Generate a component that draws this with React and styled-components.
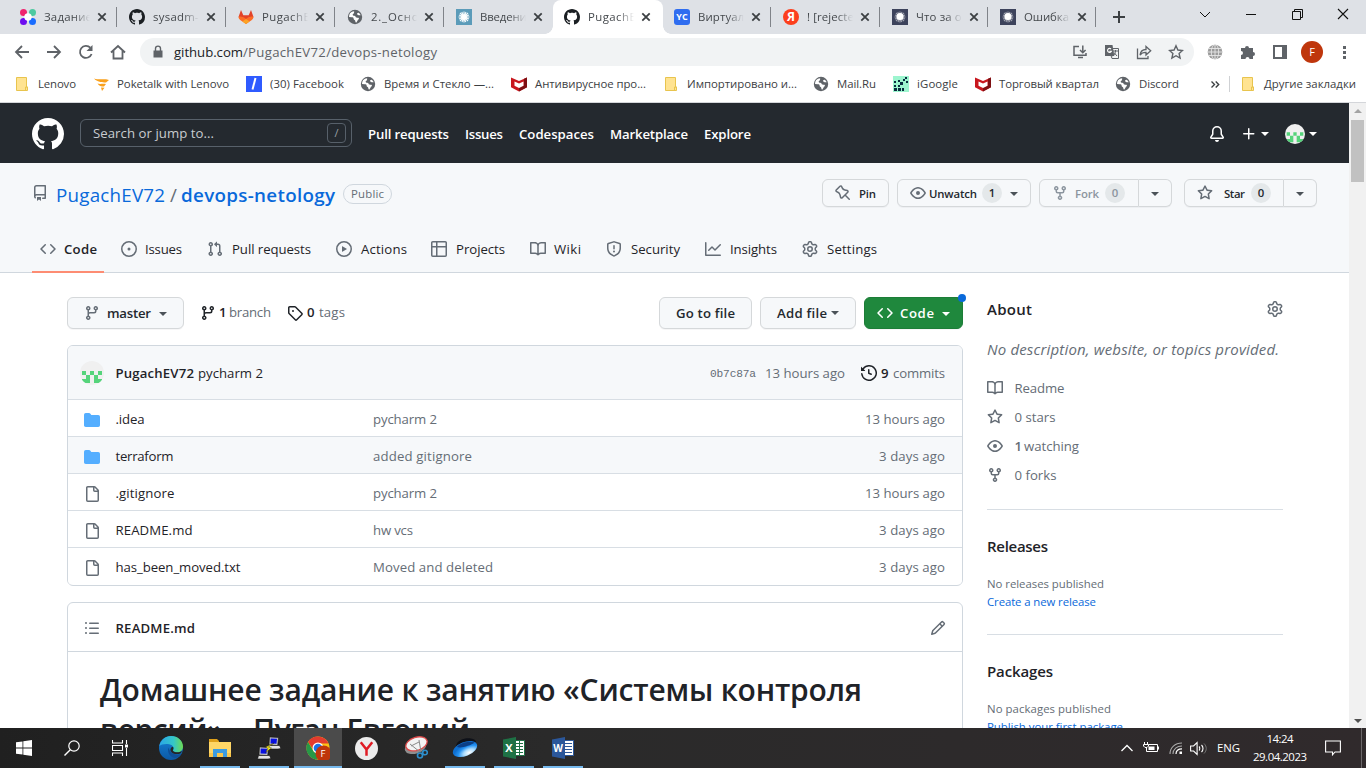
import React, { useLayoutEffect, useRef, useState } from "react";
import styled, { createGlobalStyle, css } from "styled-components";

const Global = createGlobalStyle`
  *, *::before, *::after { box-sizing: border-box; }
  body { margin: 0; overflow: hidden; background: #fff; }
  body, button, input { font-family: "Open Sans", "Noto Sans", sans-serif; }
  svg { display: block; flex: none; }
  h1, h2, p { margin: 0; }
`;

/* ---------- text ---------- */

const TextBox = styled.span`
  display: inline-block;
  flex: none;
  position: relative;
  top: ${(p) => p.$dy || 0}px;
  width: ${(p) => p.$w}px;
  margin-left: ${(p) => p.$ml || 0}px;
  font-size: ${(p) => p.$size || 13.2}px;
  font-weight: ${(p) => (p.$bold ? 600 : 400)};
  font-style: ${(p) => (p.$italic ? "italic" : "normal")};
  font-family: ${(p) => (p.$mono ? '"Liberation Mono", monospace' : "inherit")};
  color: ${(p) => p.$color || "inherit"};
  white-space: nowrap;
`;

/* A single line of text whose tracking is tuned so that it takes up exactly w pixels. */
function Text({ w, ml, size, bold, italic, mono, color, dy, children }) {
  const ref = useRef(null);
  const [tracking, setTracking] = useState(0);
  useLayoutEffect(() => {
    const natural = ref.current.getBoundingClientRect().width;
    setTracking((w - natural) / Math.max(1, children.length - 1));
  }, [w, children]);
  return (
    <TextBox $w={w} $ml={ml} $size={size} $bold={bold} $italic={italic} $mono={mono} $color={color} $dy={dy}>
      <span ref={ref} style={{ letterSpacing: tracking }}>{children}</span>
    </TextBox>
  );
}

/* ---------- icons ---------- */

const ring = "M8 0a8 8 0 100 16A8 8 0 008 0zM1.5 8a6.5 6.5 0 1113 0 6.5 6.5 0 01-13 0z";
const paths = {
  mark: "M8 0C3.58 0 0 3.58 0 8c0 3.54 2.29 6.53 5.47 7.59.4.07.55-.17.55-.38 0-.19-.01-.82-.01-1.49-2.01.37-2.53-.49-2.69-.94-.09-.23-.48-.94-.82-1.13-.28-.15-.68-.52-.01-.53.63-.01 1.08.58 1.23.82.72 1.21 1.87.87 2.33.66.07-.52.28-.87.51-1.07-1.78-.2-3.64-.89-3.64-3.95 0-.87.31-1.59.82-2.15-.08-.2-.36-1.02.08-2.12 0 0 .67-.21 2.2.82.64-.18 1.32-.27 2-.27.68 0 1.36.09 2 .27 1.53-1.04 2.2-.82 2.2-.82.44 1.1.16 1.92.08 2.12.51.56.82 1.27.82 2.15 0 3.07-1.87 3.75-3.65 3.95.29.25.54.73.54 1.48 0 1.07-.01 1.93-.01 2.2 0 .21.15.46.55.38A8.013 8.013 0 0016 8c0-4.42-3.58-8-8-8z",
  repo: "M2 2.5A2.5 2.5 0 014.5 0h8.75a.75.75 0 01.75.75v12.5a.75.75 0 01-.75.75h-2.5a.75.75 0 110-1.5h1.75v-2h-8a1 1 0 00-.714 1.7.75.75 0 01-1.072 1.05A2.495 2.495 0 012 11.5v-9zm10.5-1V9h-8c-.356 0-.694.074-1 .208V2.5a1 1 0 011-1h8zM5 12.25v3.25a.25.25 0 00.4.2l1.45-1.087a.25.25 0 01.3 0L8.6 15.7a.25.25 0 00.4-.2v-3.25a.25.25 0 00-.25-.25h-3.5a.25.25 0 00-.25.25z",
  code: "M4.72 3.22a.75.75 0 011.06 1.06L2.06 8l3.72 3.72a.75.75 0 11-1.06 1.06L.47 8.53a.75.75 0 010-1.06l4.25-4.25zm6.56 0a.75.75 0 10-1.06 1.06L13.94 8l-3.72 3.72a.75.75 0 101.06 1.06l4.25-4.25a.75.75 0 000-1.06l-4.25-4.25z",
  issue: "M8 9.5a1.5 1.5 0 100-3 1.5 1.5 0 000 3z" + ring,
  pull: "M7.177 3.073L9.573.677A.25.25 0 0110 .854v4.792a.25.25 0 01-.427.177L7.177 3.427a.25.25 0 010-.354zM3.75 2.5a.75.75 0 100 1.5.75.75 0 000-1.5zm-2.25.75a2.25 2.25 0 113 2.122v5.256a2.251 2.251 0 11-1.5 0V5.372A2.25 2.25 0 011.5 3.25zM11 2.5h-1V4h1a1 1 0 011 1v5.628a2.251 2.251 0 101.5 0V5A2.5 2.5 0 0011 2.5zm1 10.25a.75.75 0 111.5 0 .75.75 0 01-1.5 0zM3.75 12a.75.75 0 100 1.5.75.75 0 000-1.5z",
  play: ring + "M6.379 5.227A.25.25 0 006 5.442v5.117a.25.25 0 00.379.214l4.264-2.559a.25.25 0 000-.428L6.379 5.227z",
  table: "M0 1.75C0 .784.784 0 1.75 0h12.5C15.216 0 16 .784 16 1.75v12.5A1.75 1.75 0 0 1 14.25 16H1.75A1.75 1.75 0 0 1 0 14.25ZM6.5 6.5v8h7.75a.25.25 0 0 0 .25-.25V6.5Zm8-1.5V1.75a.25.25 0 0 0-.25-.25H6.5V5Zm-13 1.5v7.75c0 .138.112.25.25.25H5v-8ZM5 5V1.5H1.75a.25.25 0 0 0-.25.25V5Z",
  book: "M0 1.75A.75.75 0 01.75 1h4.253c1.227 0 2.317.59 3 1.501A3.744 3.744 0 0111.006 1h4.245a.75.75 0 01.75.75v10.5a.75.75 0 01-.75.75h-4.507a2.25 2.25 0 00-1.591.659l-.622.621a.75.75 0 01-1.06 0l-.622-.621A2.25 2.25 0 005.258 13H.75a.75.75 0 01-.75-.75V1.75zm8.755 3a2.25 2.25 0 012.25-2.25H14.5v9h-3.757c-.71 0-1.4.201-1.992.572l.004-7.322zm-1.504 7.324l.004-5.073-.002-2.253A2.25 2.25 0 005.003 2.5H1.5v9h3.757a3.75 3.75 0 011.994.574z",
  shield: "M7.467.133a1.75 1.75 0 011.066 0l5.25 1.68A1.75 1.75 0 0115 3.48V7c0 1.566-.32 3.182-1.303 4.682-.983 1.498-2.585 2.813-5.032 3.855a1.7 1.7 0 01-1.33 0c-2.447-1.042-4.049-2.357-5.032-3.855C1.32 10.182 1 8.566 1 7V3.48a1.75 1.75 0 011.217-1.667l5.25-1.68zm.61 1.429a.25.25 0 00-.153 0l-5.25 1.68a.25.25 0 00-.174.238V7c0 1.358.275 2.666 1.057 3.86.784 1.194 2.121 2.34 4.366 3.297a.2.2 0 00.154 0c2.245-.956 3.582-2.104 4.366-3.298C13.225 9.666 13.5 8.36 13.5 7V3.48a.25.25 0 00-.174-.237l-5.25-1.68zM9 10.5a1 1 0 11-2 0 1 1 0 012 0zm-.25-5.75a.75.75 0 10-1.5 0v3a.75.75 0 001.5 0v-3z",
  graph: "M1.5 1.75a.75.75 0 00-1.5 0v12.5c0 .414.336.75.75.75h14.5a.75.75 0 000-1.5H1.5V1.75zm14.28 2.53a.75.75 0 00-1.06-1.06L10 7.94 7.53 5.47a.75.75 0 00-1.06 0L3.22 8.72a.75.75 0 001.06 1.06L7 7.06l2.47 2.47a.75.75 0 001.06 0l5.25-5.25z",
  gear: "M8 0a8.2 8.2 0 0 1 .701.031C9.444.095 9.99.645 10.16 1.29l.288 1.107c.018.066.079.158.212.224.231.114.454.243.668.386.123.082.233.09.299.071l1.103-.303c.644-.176 1.392.021 1.82.63.27.385.506.792.704 1.218.315.675.111 1.422-.364 1.891l-.814.806c-.049.048-.098.147-.088.294.016.257.016.515 0 .772-.01.147.038.246.088.294l.814.806c.475.469.679 1.216.364 1.891a7.977 7.977 0 0 1-.704 1.217c-.428.61-1.176.807-1.82.63l-1.102-.302c-.067-.019-.177-.011-.3.071a5.909 5.909 0 0 1-.668.386c-.133.066-.194.158-.211.224l-.29 1.106c-.168.646-.715 1.196-1.458 1.26a8.006 8.006 0 0 1-1.402 0c-.743-.064-1.289-.614-1.458-1.26l-.289-1.106c-.018-.066-.079-.158-.212-.224a5.738 5.738 0 0 1-.668-.386c-.123-.082-.233-.09-.299-.071l-1.103.303c-.644.176-1.392-.021-1.82-.63a8.12 8.12 0 0 1-.704-1.218c-.315-.675-.111-1.422.363-1.891l.815-.806c.05-.048.098-.147.088-.294a6.214 6.214 0 0 1 0-.772c.01-.147-.038-.246-.088-.294l-.815-.806C.635 6.045.431 5.298.746 4.623a7.92 7.92 0 0 1 .704-1.217c.428-.61 1.176-.807 1.82-.63l1.102.302c.067.019.177.011.3-.071.214-.143.437-.272.668-.386.133-.066.194-.158.211-.224l.29-1.106C6.009.645 6.556.095 7.299.03 7.53.01 7.764 0 8 0Zm-.571 1.525c-.036.003-.108.036-.137.146l-.289 1.105c-.147.561-.549.967-.998 1.189-.173.086-.34.183-.5.29-.417.278-.97.423-1.529.27l-1.103-.303c-.109-.03-.175.016-.195.045-.22.312-.412.644-.573.99-.014.031-.021.11.059.19l.815.806c.411.406.562.957.53 1.456a4.709 4.709 0 0 0 0 .582c.032.499-.119 1.05-.53 1.456l-.815.806c-.081.08-.073.159-.059.19.162.346.353.677.573.989.02.03.085.076.195.046l1.102-.303c.56-.153 1.113-.008 1.53.27.161.107.328.204.501.29.447.222.85.629.997 1.189l.289 1.105c.029.109.101.143.137.146a6.6 6.6 0 0 0 1.142 0c.036-.003.108-.036.137-.146l.289-1.105c.147-.561.549-.967.998-1.189.173-.086.34-.183.5-.29.417-.278.97-.423 1.529-.27l1.103.303c.109.029.175-.016.195-.045.22-.313.411-.644.573-.99.014-.031.021-.11-.059-.19l-.815-.806c-.411-.406-.562-.957-.53-1.456a4.709 4.709 0 0 0 0-.582c-.032-.499.119-1.05.53-1.456l.815-.806c.081-.08.073-.159.059-.19a6.464 6.464 0 0 0-.573-.989c-.02-.03-.085-.076-.195-.046l-1.102.303c-.56.153-1.113.008-1.53-.27a4.44 4.44 0 0 0-.501-.29c-.447-.222-.85-.629-.997-1.189l-.289-1.105c-.029-.11-.101-.143-.137-.146a6.6 6.6 0 0 0-1.142 0ZM11 8a3 3 0 1 1-6 0 3 3 0 0 1 6 0ZM9.5 8a1.5 1.5 0 1 0-3.001.001A1.5 1.5 0 0 0 9.5 8Z",
  pin: "M4.456.734a1.75 1.75 0 012.826.504l.613 1.327a3.081 3.081 0 002.084 1.707l2.454.584c1.332.317 1.8 1.972.832 2.94L11.06 10l3.72 3.72a.75.75 0 11-1.061 1.06L10 11.06l-2.204 2.205c-.968.968-2.623.5-2.94-.832l-.584-2.454a3.081 3.081 0 00-1.707-2.084l-1.327-.613a1.75 1.75 0 01-.504-2.826L4.456.734zM5.92 1.866a.25.25 0 00-.404-.072L1.794 5.516a.25.25 0 00.072.404l1.328.613A4.582 4.582 0 015.73 9.63l.584 2.454a.25.25 0 00.42.12l5.47-5.47a.25.25 0 00-.12-.42L9.63 5.73a4.581 4.581 0 01-3.098-2.537L5.92 1.866z",
  eye: "M1.679 7.932c.412-.621 1.242-1.75 2.366-2.717C5.175 4.242 6.527 3.5 8 3.5c1.473 0 2.824.742 3.955 1.715 1.124.967 1.954 2.096 2.366 2.717a.119.119 0 010 .136c-.412.621-1.242 1.75-2.366 2.717C10.825 11.758 9.473 12.5 8 12.5c-1.473 0-2.824-.742-3.955-1.715C2.92 9.818 2.09 8.69 1.679 8.068a.119.119 0 010-.136zM8 2c-1.981 0-3.67.992-4.933 2.078C1.797 5.169.88 6.423.43 7.1a1.619 1.619 0 000 1.798c.45.678 1.367 1.932 2.637 3.024C4.329 13.008 6.019 14 8 14c1.981 0 3.67-.992 4.933-2.078 1.27-1.091 2.187-2.345 2.637-3.023a1.619 1.619 0 000-1.798c-.45-.678-1.367-1.932-2.637-3.023C11.671 2.992 9.981 2 8 2zm0 8a2 2 0 100-4 2 2 0 000 4z",
  fork: "M5 3.25a.75.75 0 11-1.5 0 .75.75 0 011.5 0zm0 2.122a2.25 2.25 0 10-1.5 0v.878A2.25 2.25 0 005.75 8.5h1.5v2.128a2.251 2.251 0 101.5 0V8.5h1.5a2.25 2.25 0 002.25-2.25v-.878a2.25 2.25 0 10-1.5 0v.878a.75.75 0 01-.75.75h-4.5A.75.75 0 015 6.25v-.878zm3.75 7.378a.75.75 0 11-1.5 0 .75.75 0 011.5 0zm3-8.75a.75.75 0 100-1.5.75.75 0 000 1.5z",
  star: "M8 .25a.75.75 0 01.673.418l1.882 3.815 4.21.612a.75.75 0 01.416 1.279l-3.046 2.97.719 4.192a.75.75 0 01-1.088.791L8 12.347l-3.766 1.98a.75.75 0 01-1.088-.79l.72-4.194L.818 6.374a.75.75 0 01.416-1.28l4.21-.611L7.327.668A.75.75 0 018 .25zm0 2.445L6.615 5.5a.75.75 0 01-.564.41l-3.097.45 2.24 2.184a.75.75 0 01.216.664l-.528 3.084 2.769-1.456a.75.75 0 01.698 0l2.77 1.456-.53-3.084a.75.75 0 01.216-.664l2.24-2.183-3.096-.45a.75.75 0 01-.564-.41L8 2.694v.001z",
  bell: "M8 16a2 2 0 001.985-1.75c.017-.137-.097-.25-.235-.25h-3.5c-.138 0-.252.113-.235.25A2 2 0 008 16zM8 1.5A3.5 3.5 0 004.5 5v2.947c0 .346-.102.683-.294.97l-1.703 2.556a.018.018 0 00-.003.01l.001.006c0 .002.002.004.004.006a.017.017 0 00.006.004l.007.001h10.964l.007-.001a.016.016 0 00.006-.004.016.016 0 00.004-.006l.001-.007a.017.017 0 00-.003-.01l-1.703-2.554a1.75 1.75 0 01-.294-.97V5A3.5 3.5 0 008 1.5zM3 5a5 5 0 0110 0v2.947c0 .05.015.098.042.139l1.703 2.555A1.518 1.518 0 0113.482 13H2.518a1.518 1.518 0 01-1.263-2.36l1.703-2.554A.25.25 0 003 7.947V5z",
  plus: "M7.75 2a.75.75 0 01.75.75V7h4.25a.75.75 0 110 1.5H8.5v4.25a.75.75 0 11-1.5 0V8.5H2.75a.75.75 0 010-1.5H7V2.75A.75.75 0 017.75 2z",
  branch: "M9.5 3.25a2.25 2.25 0 1 1 3 2.122V6A2.5 2.5 0 0 1 10 8.5H6a1 1 0 0 0-1 1v1.128a2.251 2.251 0 1 1-1.5 0V5.372a2.25 2.25 0 1 1 1.5 0v1.836A2.493 2.493 0 0 1 6 7h4a1 1 0 0 0 1-1v-.628A2.25 2.25 0 0 1 9.5 3.25Zm-6 0a.75.75 0 1 0 1.5 0 .75.75 0 0 0-1.5 0Zm8.25-.75a.75.75 0 1 0 0 1.5.75.75 0 0 0 0-1.5ZM4.25 12a.75.75 0 1 0 0 1.5.75.75 0 0 0 0-1.5Z",
  tag: "M1 7.775V2.75C1 1.784 1.784 1 2.75 1h5.025c.464 0 .91.184 1.238.513l6.25 6.25a1.75 1.75 0 0 1 0 2.474l-5.026 5.026a1.75 1.75 0 0 1-2.474 0l-6.25-6.25A1.752 1.752 0 0 1 1 7.775Zm1.5 0c0 .066.026.13.073.177l6.25 6.25a.25.25 0 0 0 .354 0l5.025-5.025a.25.25 0 0 0 0-.354l-6.25-6.25a.25.25 0 0 0-.177-.073H2.75a.25.25 0 0 0-.25.25ZM6 5a1 1 0 1 1 0 2 1 1 0 0 1 0-2Z",
  history: "m.427 1.927 1.215 1.215a8.002 8.002 0 1 1-1.6 5.685.75.75 0 1 1 1.493-.154 6.5 6.5 0 1 0 1.18-4.458l1.358 1.358A.25.25 0 0 1 3.896 6H.25A.25.25 0 0 1 0 5.75V2.104a.25.25 0 0 1 .427-.177ZM7.75 4a.75.75 0 0 1 .75.75v2.992l2.028.812a.75.75 0 0 1-.557 1.392l-2.5-1A.751.751 0 0 1 7 8.25v-3.5A.75.75 0 0 1 7.75 4Z",
  file: "M2 1.75C2 .784 2.784 0 3.75 0h6.586c.464 0 .909.184 1.237.513l2.914 2.914c.329.328.513.773.513 1.237v9.586A1.75 1.75 0 0 1 13.25 16h-9.5A1.75 1.75 0 0 1 2 14.25Zm1.75-.25a.25.25 0 0 0-.25.25v12.5c0 .138.112.25.25.25h9.5a.25.25 0 0 0 .25-.25V6h-2.75A1.75 1.75 0 0 1 9 4.25V1.5Zm6.75.062V4.25c0 .138.112.25.25.25h2.688l-.011-.013-2.914-2.914-.013-.011Z",
  folder: "M1.75 1A1.75 1.75 0 0 0 0 2.75v10.5C0 14.216.784 15 1.75 15h12.5A1.75 1.75 0 0 0 16 13.25v-8.5A1.75 1.75 0 0 0 14.25 3H7.5a.25.25 0 0 1-.2-.1l-.9-1.2C6.07 1.26 5.55 1 5 1H1.75Z",
  list: "M5.75 2.5h8.5a.75.75 0 0 1 0 1.5h-8.5a.75.75 0 0 1 0-1.5Zm0 5h8.5a.75.75 0 0 1 0 1.5h-8.5a.75.75 0 0 1 0-1.5Zm0 5h8.5a.75.75 0 0 1 0 1.5h-8.5a.75.75 0 0 1 0-1.5ZM2 14a1 1 0 1 1 0-2 1 1 0 0 1 0 2Zm1-6a1 1 0 1 1-2 0 1 1 0 0 1 2 0ZM2 4a1 1 0 1 1 0-2 1 1 0 0 1 0 2Z",
  pencil: "M11.013 1.427a1.75 1.75 0 0 1 2.474 0l1.086 1.086a1.75 1.75 0 0 1 0 2.474l-8.61 8.61c-.21.21-.47.364-.756.445l-3.251.93a.75.75 0 0 1-.927-.928l.929-3.25c.081-.286.235-.547.445-.758l8.61-8.61Zm.176 4.823L9.75 4.81l-6.286 6.287a.253.253 0 0 0-.064.108l-.558 1.953 1.953-.558a.253.253 0 0 0 .108-.064Zm1.238-3.763a.25.25 0 0 0-.354 0L10.811 3.75l1.439 1.44 1.263-1.263a.25.25 0 0 0 0-.354Z",
};

const IconSvg = styled.svg`
  margin-left: ${(p) => p.$ml || 0}px;
  fill: ${(p) => p.$color || "#656d76"};
`;
const Icon = ({ name, size = 16, ml, color }) => (
  <IconSvg width={size} height={size} viewBox="0 0 16 16" $ml={ml} $color={color}>
    <path fillRule="evenodd" d={paths[name]} />
  </IconSvg>
);

const Caret = styled.i`
  flex: none;
  width: 0;
  height: 0;
  margin-left: ${(p) => p.$ml || 0}px;
  margin-top: ${(p) => p.$mt || 0}px;
  border: 4px solid transparent;
  border-bottom-width: 0;
  border-top-color: ${(p) => p.$color || "#4b5258"};
`;

const Draw = styled.svg.attrs((p) => ({ viewBox: `0 0 ${p.$vw || 16} ${p.$vh || p.$vw || 16}`, fill: "none" }))`
  width: ${(p) => p.$w || 16}px;
  height: ${(p) => p.$h || p.$w || 16}px;
  margin-left: ${(p) => p.$ml || 0}px;
  margin-bottom: ${(p) => p.$mb || 0}px;
`;

const Identicon = ({ size, ml }) => (
  <Draw $w={size} $vw={24} $ml={ml}>
    <clipPath id={`round${size}`}><circle cx="12" cy="12" r="12" /></clipPath>
    <g clipPath={`url(#round${size})`}>
      <path fill="#f0f0f0" d="M0 0h24v24H0z" />
      <path fill="#55d47b" d="M2 10h4v4H2zM10 10h4v4h-4zM18 10h4v4h-4zM6 14h4v4H6zM14 14h4v4h-4zM2 18h8v4H2zM14 18h8v4h-8z" />
    </g>
  </Draw>
);

const Globe = ({ ml }) => (
  <Draw $w={16} $ml={ml}>
    <circle cx="8" cy="8" r="7.2" fill="#5f6368" />
    <path fill="#fff" d="M3 4.200C4.200 3 5.600 2.300 7.200 2.200c-.4 1 .3 1.500-.5 2.300-.6.500-1.200.7-1 1.500.3.8 1.400.6 2.300.9.900.4.6 1.500 1.500 1.700.900.2 2.200-.3 2.400.7.2 1-.9 1.300-1.300 2.100-.300.7-.7 1.500-1.500 2.300-.8-.1-.6-1.300-1-2.100-.400-.8-1.600-.800-1.500-2 .1-.9-.7-1.300-1.700-1.300L2 8c0-1.400.3-2.700 1-3.800z" />
    <path fill="#fff" d="M10 4.500c.6-.7 1.300-.9 2-.6.8.7 1.300 1.500 1.600 2.400-1.400.1-3.300.2-3.600-1.800z" />
  </Draw>
);

const Burst = ({ bg, fg, fill }) => (
  <Draw>
    <path fill={bg} d="M0 0h16v16H0z" />
    <circle cx="8" cy={fill ? 7.5 : 8} r={fill ? 3.5 : 2.6} fill={fg} />
    <path stroke={fg} strokeWidth="1.100" d="M8 2.500v11M2.500 8h11M4 4l8 8M12 4l-8 8M5.800 3l4 10M10 3 6 13M3 6l10 4M3 10l10-4" opacity={fill ? 0.5 : 0.95} />
  </Draw>
);

const Mcafee = ({ ml }) => (
  <Draw $ml={ml}>
    <path fill="#c8171e" d="M0 1.500 8 5l8-3.500v9.800L8 15.500l-8-4.200z" />
    <path fill="#7d1013" d="M16 1.500v9.800L8 15.500V12l5-2.600V2.800z" />
    <path fill="#fff" d="m3.500 5.500 4.500 2 4.500-2v4.200L8 12 3.500 9.700z" />
  </Draw>
);

const FolderMark = ({ ml }) => (
  <Draw $ml={ml} $w={14} $h={16} $vw={14} $vh={16}>
    <path fill="#ffe391" stroke="#e8c44e" d="M1.500 1.500h10v9.500h1v3.500h-11z" />
    <path stroke="#e8c44e" d="M10.500 14v-3h2" />
  </Draw>
);

const favicons = {
  netology: (
    <Draw>
      <circle cx="3.500" cy="3.500" r="3.500" fill="#f0246e" /><circle cx="12.500" cy="3.500" r="3.500" fill="#4cc9a0" />
      <circle cx="3.500" cy="12.500" r="3.500" fill="#6d0df0" /><circle cx="12.500" cy="12.500" r="3.500" fill="#1a6dff" />
      <path fill="#f0246e" d="M3 3h4v4H3z" /><path fill="#4cc9a0" d="M9 3h4v4H9z" /><path fill="#6d0df0" d="M3 9h4v4H3z" /><path fill="#1a6dff" d="M9 9h4v4H9z" />
      <circle cx="8" cy="8" r="3.700" fill="#fff" />
    </Draw>
  ),
  github: <Icon name="mark" color="#1b1f23" />,
  gitlab: (
    <Draw>
      <path fill="#e24329" d="M3 1 5.300 6.300h5.400L13 1l2.500 7L8 14.500.5 8z" />
      <path fill="#fc6d26" d="M.5 8C2 7.200 5 7.500 8 10c3-2.500 6-2.800 7.500-2-.2 1.500-1 2.500-2 3.200L8 15l-5.500-3.800C1.500 10.500.7 9.500.5 8z" />
      <path fill="#fca326" d="M8 10 4.300 12.400 8 15l3.700-2.600z" />
    </Draw>
  ),
  globe: <Globe />,
  burstBlue: <Burst bg="#5b9bb9" fg="#fff" />,
  burstDark: <Burst bg="#3d435c" fg="#fff" fill />,
};

/* ---------- browser chrome ---------- */

const Screen = styled.div`
  width: 1366px;
  height: 768px;
  display: flex;
  flex-direction: column;
  overflow: hidden;
  color: #1f2328;
`;
const Row = styled.div`
  display: flex;
  align-items: center;
`;
const TabStrip = styled(Row)`
  height: 34px;
  flex: none;
  padding-left: 9px;
  background: #dee1e6;
`;
const Tab = styled.div`
  flex: none;
  display: flex;
  align-items: center;
  width: ${(p) => p.$w}px;
  height: 34px;
  padding-left: 11px;
  border-radius: 8px 8px 0 0;
  background: ${(p) => (p.$active ? "#fff" : "transparent")};
  ${(p) => p.$active && css`
    position: relative;
    &::before, &::after {
      content: "";
      position: absolute;
      bottom: 0;
      width: 8px;
      height: 8px;
    }
    &::before { left: -8px; background: radial-gradient(circle at 0 0, transparent 7.5px, #fff 8px); }
    &::after { right: -8px; background: radial-gradient(circle at 100% 0, transparent 7.5px, #fff 8px); }
  `}
`;
const TabTitle = styled.div`
  display: flex;
  width: 46px;
  margin: 0 4px 1px 8px;
  overflow: hidden;
  color: #45494d;
  mask-image: linear-gradient(90deg, #000 65%, transparent 100%);
`;
const Divider = styled.div`
  flex: none;
  width: 1px;
  height: ${(p) => p.$h || 20}px;
  margin-left: ${(p) => (p.$auto ? "auto" : `${p.$ml || 0}px`)};
  margin-right: ${(p) => (p.$auto ? 1 : 0)}px;
  background: ${(p) => p.$color || "#808389"};
`;
const Cross = ({ ml, size = 16 }) => (
  <Draw $w={size} $ml={ml}><path stroke="#3c4043" strokeWidth="1.800" d="m4.300 4.300 7.400 7.400m0-7.400-7.400 7.400" /></Draw>
);
const YcIcon = styled.span`
  width: 16px;
  height: 16px;
  flex: none;
  border-radius: ${(p) => (p.$round ? "50%" : "3px")};
  background: ${(p) => p.$bg};
  color: #fff;
  font-size: ${(p) => p.$size}px;
  font-weight: 700;
  line-height: 16px;
  text-align: center;
`;

const tabs = [
  ["netology", "Задание", 48, 109],
  ["github", "sysadm-h", 53, 109],
  ["gitlab", "PugachEV", 55, 109],
  ["globe", "2._Основ", 55, 109],
  ["burstBlue", "Введение", 53, 108],
  ["github", "PugachEV", 55, 110, true],
  ["yc", "Виртуаль", 53, 109],
  ["ya", "! [rejected", 54, 109],
  ["burstDark", "Что за ош", 56, 108],
  ["burstDark", "Ошибка", 45, 108],
];

function BrowserTab({ icon, title, textWidth, width, active, divided }) {
  return (
    <Tab $w={width} $active={active}>
      {icon === "yc" ? <YcIcon $bg="#2f6df0" $size={9}>YC</YcIcon>
        : icon === "ya" ? <YcIcon $bg="#fc3f1d" $size={12} $round>Я</YcIcon>
        : favicons[icon]}
      <TabTitle><Text size={11.4} w={textWidth}>{title}</Text></TabTitle>
      <Cross />
      {divided && <Divider $auto />}
    </Tab>
  );
}

const ToolRow = styled(Row)`
  height: 36px;
  flex: none;
  background: #fff;
`;
const Address = styled(Row)`
  width: 1054px;
  height: 28px;
  margin-left: 14px;
  padding-left: 11px;
  border-radius: 14px;
  background: #f1f3f4;
`;
const Profile = styled.div`
  flex: none;
  width: 22px;
  height: 22px;
  margin-left: 13px;
  border-radius: 50%;
  background: #bf360c;
  color: #fff;
  font-size: 11px;
  line-height: 22px;
  text-align: center;
`;
const Bookmarks = styled(Row)`
  height: 33px;
  flex: none;
  padding-bottom: 4px;
  background: #fff;
  border-bottom: 1px solid #d4d6da;
  color: #3c4043;
`;
const Bookmark = ({ w, ml = 8, children }) => <Text ml={ml} size={11.4} w={w} dy={-1}>{children}</Text>;

const gray = { stroke: "#5f6368", strokeWidth: 1.8 };

function BrowserChrome() {
  return (
    <>
      <TabStrip>
        {tabs.map(([icon, title, tw, w, active], i) => (
          <BrowserTab key={i} icon={icon} title={title} textWidth={tw} width={w} active={active} divided={i !== 4 && i !== 5} />
        ))}
        <Draw $ml={14}><path stroke="#3c4043" strokeWidth="2" d="M8 2v12M2 8h12" /></Draw>
        <Draw $w={12} $ml={72} $mb={5} $vw={12}><path stroke="#111" d="m1 3 5 5 5-5" /></Draw>
        <Draw $w={10} $ml={35} $mb={6} $vw={10}><path stroke="#111" d="M0 5.500h10" /></Draw>
        <Draw $w={11} $ml={36} $mb={6} $vw={11}><path stroke="#111" d="M.5 2.500h8v8h-8zM2.500 2.500v-2h8v8h-2" /></Draw>
        <Draw $w={12} $ml={34} $mb={6} $vw={12}><path stroke="#111" strokeWidth="1.100" d="m1 1 10 10M11 1 1 11" /></Draw>
      </TabStrip>
      <ToolRow>
        <Draw $ml={14}><path {...gray} d="M15 8H2.500M8 2 2 8l6 6" /></Draw>
        <Draw $ml={16}><path {...gray} d="M1 8h12.500M8 2l6 6-6 6" /></Draw>
        <Draw $ml={16}><path {...gray} d="M13.600 10A6 6 0 1 1 12.300 3.700" /><path fill="#5f6368" d="M14.500 1v6h-6z" /></Draw>
        <Draw $ml={16}><path {...gray} d="M1 8.500 8 2l7 6.500M3.500 7v7.500h9V7" /></Draw>
        <Address>
          <Draw $w={14} $vw={14}><path fill="#5f6368" d="M2.500 5.500h9v7h-9z" /><path stroke="#5f6368" strokeWidth="1.400" d="M4.500 6V3.600a2.500 2.500 0 0 1 5 0V6" /></Draw>
          <Text ml={9} size={13.2} w={69} color="#202124">github.com</Text>
          <Text size={13.2} w={194} color="#5f6368">/PugachEV72/devops-netology</Text>
          <Draw $ml={635}><path stroke="#5f6368" strokeWidth="1.500" d="M7 2.500H2v8.800h12V9M6 13.500h5M10.800 1.500v7M8 6l2.800 2.800L13.600 6" /></Draw>
          <Draw $ml={16}><path fill="#5f6368" d="M1 1h7.500l1.800 11H1z" /><path stroke="#5f6368" d="M7 4.500h7.500v10H8l-.8-2.500M9 7h5M11.500 6v1c0 2-1 4-3 5M10 8.500l3 3.500" /><path stroke="#fff" strokeWidth="1.100" d="M7 5A2 2 0 1 0 7.300 7.400H5.400" /></Draw>
          <Draw $ml={16}><path stroke="#5f6368" strokeWidth="1.300" d="M1.500 4.500v10h10.500V12M4 11c.5-3.500 2.500-5.500 6-5.500V2.500l4.700 4.300L10 11V8.300C7.500 8.200 5.500 9 4 11z" /></Draw>
          <Draw $ml={16}><path stroke="#5f6368" strokeWidth="1.400" d="m8 1.800 1.900 4.200 4.600.5-3.400 3 1 4.500L8 11.700 3.900 14l1-4.500-3.400-3 4.600-.5z" /></Draw>
        </Address>
        <Draw $ml={13}><circle cx="8" cy="8" r="7.300" fill="#9b9b9b" /><path stroke="#e6e6e6" strokeWidth=".9" d="M8 0v16M0 8h16M1.500 4.500h13M1.500 11.500h13" /><ellipse cx="8" cy="8" rx="3.700" ry="7.500" stroke="#e6e6e6" strokeWidth=".9" /></Draw>
        <Draw $ml={17}><path fill="#5f6368" d="M1 4h4a2 2 0 1 1 4 0h4v4a2 2 0 1 1 0 4v3H9.500a2 2 0 1 0-4 0H1v-4a2 2 0 0 0 0-4z" /></Draw>
        <Draw $ml={16}><path fill="#5f6368" d="M1 1h14v14H1zM3 3v10h7V3z" fillRule="evenodd" /></Draw>
        <Profile>F</Profile>
        <Draw $ml={13}><path fill="#5f6368" d="M7 2h3v3H7zM7 7h3v3H7zM7 12h3v3H7z" /></Draw>
      </ToolRow>
      <Bookmarks>
        <FolderMark ml={15} />
        <Bookmark ml={9} w={38}>Lenovo</Bookmark>
        <Draw $ml={18}><path fill="#f9a01b" d="M0 2.500c5 1.700 10 0 15 1.500l-3 2.500C8 6.500 3 6 0 2.500zM3.500 7.500c2 1 5 0 8.500.5L10 10.500c-3 0-5-.5-6.500-3zM7 11.500l3.500.2L8 15z" /></Draw>
        <Bookmark ml={7} w={112}>Poketalk with Lenovo</Bookmark>
        <Draw $ml={17}><path fill="#2f5bff" d="M0 0h16v16H0z" /><path stroke="#fff" strokeWidth="2" d="m9.500 2-3 11.500" /></Draw>
        <Bookmark w={74}>(30) Facebook</Bookmark>
        <Globe ml={16} />
        <Bookmark w={110}>Время и Стекло —...</Bookmark>
        <Mcafee ml={17} />
        <Bookmark w={111}>Антивирусное про...</Bookmark>
        <FolderMark ml={18} />
        <Bookmark ml={9} w={110}>Импортировано и...</Bookmark>
        <Globe ml={16} />
        <Bookmark w={39}>Mail.Ru</Bookmark>
        <Draw $ml={17}><path fill="#9df5cf" d="M0 0h16v16H0z" /><path fill="#0a2c3f" d="M1 5h2v2H1zM1 9h2v2H1zM1 12h3v3H1zM5 9h2v2H5zM5 12h3v3H5zM9 12h2v3H9zM5 4h2v2H5zM7 6h3v3H7zM12 1h2v2h-2zM10 3h2v2h-2zM13 5h2v2h-2z" /></Draw>
        <Bookmark w={41}>iGoogle</Bookmark>
        <Mcafee ml={17} />
        <Bookmark w={100}>Торговый квартал</Bookmark>
        <Globe ml={16} />
        <Bookmark w={40}>Discord</Bookmark>
        <Draw $ml={32} $w={9} $vw={9}><path stroke="#3c4043" strokeWidth="1.400" d="m.5 1.500 3 3-3 3M4.700 1.500l3 3-3 3" /></Draw>
        <Divider $ml={9} $h={16} $color="#cfd1d4" />
        <FolderMark ml={11} />
        <Bookmark ml={9} w={92}>Другие закладки</Bookmark>
      </Bookmarks>
    </>
  );
}

/* ---------- repository page ---------- */

const Viewport = styled.div`
  display: flex;
  height: 625px;
  flex: none;
  overflow: hidden;
`;
const Page = styled.div`
  width: 1349px;
  height: 625px;
  overflow: hidden;
  background: #fff;
`;
const ScrollBar = styled.div`
  width: 17px;
  display: flex;
  flex-direction: column;
  align-items: center;
  padding: 6px 0 5px;
  background: #f1f1f1;
`;
const Arrow = styled.i`
  border: 4px solid transparent;
  ${(p) => (p.$up
    ? css`border-top-width: 0; border-bottom-color: #a3a3a3;`
    : css`border-bottom-width: 0; border-top-color: #505050; margin-top: auto;`)}
`;
const Thumb = styled.div`
  width: 13px;
  height: 62px;
  margin-top: 7px;
  background: #c1c1c1;
`;

const SiteHeader = styled(Row)`
  height: 60px;
  padding: 1px 0 0 32px;
  background: #24292f;
  color: #fff;
`;
const Search = styled(Row)`
  width: 272px;
  height: 28px;
  margin: -1px 0 0 16px;
  padding: 0 5px 0 12px;
  justify-content: space-between;
  border: 1px solid #57606a;
  border-radius: 6px;
`;
const SlashKey = styled.span`
  width: 19px;
  height: 20px;
  border: 1px solid #57606a;
  border-radius: 4px;
  color: #9aa0a6;
  font-size: 11px;
  line-height: 18px;
  text-align: center;
`;
const RepoHead = styled.div`
  height: 110px;
  padding: 16px 32px 0;
  background: #f6f8fa;
  border-bottom: 1px solid #d0d7de;
`;
const TitleRow = styled(Row)`
  height: 28px;
  color: #0969da;
`;
const Badge = styled.span`
  display: flex;
  align-items: center;
  justify-content: center;
  width: 49px;
  height: 20px;
  margin: 1px 0 0 8px;
  border: 1px solid #d0d7de;
  border-radius: 10px;
  color: #656d76;
`;
const Actions = styled(Row)`
  margin-left: auto;
`;
const Button = styled.div`
  flex: none;
  display: flex;
  align-items: center;
  width: ${(p) => p.$w}px;
  height: ${(p) => p.$h || 28}px;
  margin-left: ${(p) => p.$ml || 0}px;
  padding-left: ${(p) => p.$pl}px;
  border: 1px solid ${(p) => (p.$primary ? "#1c7d37" : "#d5d8da")};
  border-radius: ${(p) => (p.$side === "l" ? "6px 0 0 6px" : p.$side === "r" ? "0 6px 6px 0" : "6px")};
  ${(p) => p.$side === "r" && "border-left: 0;"}
  background: ${(p) => (p.$primary ? "#1f883d" : "#f6f8fa")};
  color: ${(p) => (p.$primary ? "#fff" : p.$muted ? "#8c959f" : "#24292f")};
  box-shadow: 0 1px 0 rgba(31, 35, 40, 0.04);
  position: relative;
`;
const Counter = styled.span`
  width: 20px;
  height: 20px;
  margin-left: ${(p) => p.$ml}px;
  border-radius: 10px;
  background: #e4e8ea;
  font-size: 11.4px;
  font-weight: 600;
  line-height: 20px;
  text-align: center;
`;
const NewDot = styled.i`
  position: absolute;
  top: -4px;
  right: -4px;
  width: 8px;
  height: 8px;
  border-radius: 50%;
  background: #0969da;
`;
const RepoTabs = styled(Row)`
  height: 48px;
  margin-top: 18px;
`;
const RepoTab = styled(Row)`
  height: 48px;
  margin-left: ${(p) => p.$ml}px;
  padding: 0 ${(p) => (p.$active ? "7px 0 8px" : "0")};
  ${(p) => p.$active && "box-shadow: inset 0 -2px 0 #fd8c73;"}
`;

const repoTabs = [
  ["code", "Code", 33, 0, 8, true],
  ["issue", "Issues", 37, 17, 8],
  ["pull", "Pull requests", 79, 25, 9],
  ["play", "Actions", 46, 25, 9],
  ["table", "Projects", 49, 24, 9],
  ["book", "Wiki", 27, 25, 8],
  ["shield", "Security", 49, 25, 9],
  ["graph", "Insights", 47, 25, 9],
  ["gear", "Settings", 50, 25, 9],
];

const Content = styled.div`
  display: flex;
  padding: 24px 66px 0 67px;
`;
const Main = styled.div`
  width: 896px;
  flex: none;
`;
const FileNav = styled(Row)`
  height: 32px;
  margin-bottom: 16px;
`;
const Panel = styled.div`
  border: 1px solid #d0d7de;
  border-radius: 6px;
  overflow: hidden;
  background: #fff;
`;
const FilePanel = styled(Panel)`
  height: 241px;
`;
const CommitBar = styled(Row)`
  height: 53px;
  padding: 1px 17px 0 12px;
  background: #f6f8fa;
`;
const FileRow = styled(Row)`
  height: 37px;
  padding: 4px 17px 0 16px;
  border-top: 1px solid #d8dee4;
  background: ${(p) => (p.$shade ? "#f6f8fa" : "#fff")};
`;
const NameCell = styled.div`
  display: flex;
  width: 257.5px;
  margin-left: 15.5px;
`;
const Push = styled(Row)`
  margin-left: auto;
`;
const Readme = styled(Panel)`
  height: 200px;
  margin-top: 16px;
`;
const ReadmeBar = styled(Row)`
  height: 49px;
  padding: 1px 16px 0;
  border-bottom: 1px solid #d0d7de;
`;
const Heading = styled.h1`
  display: flex;
  flex-direction: column;
  padding: 18px 32px 0;
  line-height: 40px;
`;

const files = [
  ["folder", ".idea", 29, "pycharm 2", 64, "13 hours ago", 80],
  ["folder", "terraform", 58, "added gitignore", 99, "3 days ago", 66],
  ["file", ".gitignore", 59, "pycharm 2", 64, "13 hours ago", 80],
  ["file", "README.md", 77, "hw vcs", 40, "3 days ago", 66],
  ["file", "has_been_moved.txt", 125, "Moved and deleted", 120, "3 days ago", 66],
];

const Sidebar = styled.aside`
  width: 296px;
  margin-left: 24px;
  color: #656d76;
`;
const Line = styled(Row)`
  height: ${(p) => p.$h}px;
  margin-top: ${(p) => p.$mt || 0}px;
  justify-content: ${(p) => (p.$spread ? "space-between" : "flex-start")};
`;
const Rule = styled.div`
  height: 1px;
  margin-top: ${(p) => p.$mt}px;
  background: #d8dee4;
`;

function RepoPage() {
  return (
    <Page>
      <SiteHeader>
        <Icon name="mark" size={32} color="#fff" />
        <Search><Text w={121} color="#c8ccd0">Search or jump to...</Text><SlashKey>/</SlashKey></Search>
        <Text bold ml={16} w={81}>Pull requests</Text>
        <Text bold ml={16} w={38}>Issues</Text>
        <Text bold ml={16} w={75}>Codespaces</Text>
        <Text bold ml={16} w={78}>Marketplace</Text>
        <Text bold ml={16} w={47}>Explore</Text>
        <Icon name="bell" ml={458} color="#fff" />
        <Icon name="plus" ml={16} color="#fff" />
        <Caret $ml={4} $mt={1} $color="#fff" />
        <Identicon size={20} ml={16} />
        <Caret $ml={4} $color="#fff" />
      </SiteHeader>
      <RepoHead>
        <TitleRow>
          <Icon name="repo" />
          <Text ml={8} size={18.8} w={109} dy={2}>PugachEV72</Text>
          <Text ml={5} size={18.8} w={7} dy={2} color="#656d76">/</Text>
          <Text ml={4} size={18.8} w={154} bold dy={2}>devops-netology</Text>
          <Badge><Text size={11.4} w={33}>Public</Text></Badge>
          <Actions>
            <Button $w={67} $pl={12}><Icon name="pin" /><Text bold ml={8} size={11.4} w={17}>Pin</Text></Button>
            <Button $w={134} $ml={8} $pl={12}>
              <Icon name="eye" /><Text bold ml={3} size={11.4} w={48}>Unwatch</Text><Counter $ml={5}>1</Counter><Caret $ml={8} $mt={2} />
            </Button>
            <Button $w={100} $ml={8} $pl={12} $side="l" $muted>
              <Icon name="fork" color="#8c959f" /><Text bold ml={7} size={11.4} w={24}>Fork</Text><Counter $ml={6}>0</Counter>
            </Button>
            <Button $w={33} $pl={12} $side="r"><Caret $mt={1} /></Button>
            <Button $w={100} $ml={12} $pl={12} $side="l">
              <Icon name="star" /><Text bold ml={11} size={11.4} w={21}>Star</Text><Counter $ml={6}>0</Counter>
            </Button>
            <Button $w={33} $pl={12} $side="r"><Caret $mt={1} /></Button>
          </Actions>
        </TitleRow>
        <RepoTabs>
          {repoTabs.map(([icon, label, w, ml, gap, active]) => (
            <RepoTab key={label} $ml={ml} $active={active}>
              <Icon name={icon} /><Text ml={gap} w={w} bold={active}>{label}</Text>
            </RepoTab>
          ))}
        </RepoTabs>
      </RepoHead>
      <Content>
        <Main>
          <FileNav>
            <Button $h={32} $w={117} $pl={16}><Icon name="branch" /><Text bold ml={7} w={44}>master</Text><Caret $ml={8} $mt={2} /></Button>
            <Icon name="branch" ml={16} color="#1f2328" />
            <Text bold ml={3} w={7} dy={-1}>1</Text><Text ml={3} w={42} dy={-1} color="#656d76">branch</Text>
            <Icon name="tag" ml={16} color="#1f2328" />
            <Text bold ml={4} w={8} dy={-1}>0</Text><Text ml={4} w={26} dy={-1} color="#656d76">tags</Text>
            <Push>
              <Button $h={32} $w={93} $pl={16}><Text bold w={59}>Go to file</Text></Button>
              <Button $h={32} $w={96} $ml={8} $pl={16}><Text bold w={50}>Add file</Text><Caret $ml={4} $mt={-1} /></Button>
              <Button $h={32} $w={99} $ml={8} $pl={12} $primary>
                <Icon name="code" color="#fff" /><Text bold ml={7} w={34}>Code</Text><Caret $ml={8} $mt={1} $color="#fff" /><NewDot />
              </Button>
            </Push>
          </FileNav>
          <FilePanel>
            <CommitBar>
              <Identicon size={24} />
              <Text bold ml={11.5} w={78.5}>PugachEV72</Text><Text ml={4} w={65}>pycharm 2</Text>
              <Push>
                <Text mono size={11.2} w={46} dy={1} color="#656d76">0b7c87a</Text>
                <Text ml={9} w={80} color="#656d76">13 hours ago</Text>
                <Icon name="history" ml={16} color="#1f2328" />
                <Text bold ml={4} w={8}>9</Text><Text ml={4} w={52} color="#656d76">commits</Text>
              </Push>
            </CommitBar>
            {files.map(([icon, name, nw, message, mw, age, aw], i) => (
              <FileRow key={name} $shade={i === 1}>
                <Icon name={icon} color={icon === "folder" ? "#54aeff" : "#656d76"} />
                <NameCell><Text w={nw} dy={-1}>{name}</Text></NameCell>
                <Text w={mw} dy={-1} color="#656d76">{message}</Text>
                <Push><Text w={aw} dy={-1} color="#656d76">{age}</Text></Push>
              </FileRow>
            ))}
          </FilePanel>
          <Readme>
            <ReadmeBar>
              <Icon name="list" /><Text bold ml={15.5} w={79.5}>README.md</Text>
              <Push><Icon name="pencil" /></Push>
            </ReadmeBar>
            <Heading>
              <Text bold size={30} w={762}>Домашнее задание к занятию «Системы контроля</Text>
              <Text bold size={30} w={370}>версий» – Пугач Евгений</Text>
            </Heading>
          </Readme>
        </Main>
        <Sidebar>
          <Line $h={24} $spread><Text bold size={15} w={45} color="#1f2328">About</Text><Icon name="gear" /></Line>
          <Line $h={24} $mt={16}><Text italic size={15} w={292}>No description, website, or topics provided.</Text></Line>
          <Line $h={20} $mt={17}><Icon name="book" /><Text ml={11.5} w={50}>Readme</Text></Line>
          <Line $h={20} $mt={9}><Icon name="star" /><Text ml={11.5} w={41}>0 stars</Text></Line>
          <Line $h={20} $mt={9}><Icon name="eye" /><Text bold ml={11.5} w={6.5}>1</Text><Text ml={3} w={55}>watching</Text></Line>
          <Line $h={20} $mt={9}><Icon name="fork" /><Text ml={11.5} w={42}>0 forks</Text></Line>
          <Rule $mt={24} />
          <Line $h={24} $mt={24}><Text bold size={15} w={61} color="#1f2328">Releases</Text></Line>
          <Line $h={18} $mt={16}><Text size={11.4} w={117}>No releases published</Text></Line>
          <Line $h={18}><Text size={11.4} w={109} color="#0969da">Create a new release</Text></Line>
          <Rule $mt={24} />
          <Line $h={24} $mt={24}><Text bold size={15} w={66} color="#1f2328">Packages</Text></Line>
          <Line $h={18} $mt={16}><Text size={11.4} w={124}>No packages published</Text></Line>
          <Line $h={18}><Text size={11.4} w={136} color="#0969da">Publish your first package</Text></Line>
        </Sidebar>
      </Content>
    </Page>
  );
}

/* ---------- taskbar ---------- */

const TaskBar = styled.div`
  display: flex;
  height: 40px;
  flex: none;
  background: linear-gradient(90deg, #202020, #2a2a2a 40%, #2d2a2b 70%, #302a2c);
  color: #fff;
`;
const Cell = styled.div`
  position: relative;
  flex: none;
  display: flex;
  align-items: center;
  justify-content: center;
  width: ${(p) => p.$w || 49}px;
  height: 40px;
  margin-left: ${(p) => p.$ml || 0}px;
  background: ${(p) => (p.$active ? "linear-gradient(#4b4b4b, #4b4b4b) center / 48px 40px no-repeat" : "none")};
  &::after {
    content: "";
    position: absolute;
    bottom: 0;
    width: ${(p) => (p.$active ? 48 : 40)}px;
    height: 2px;
    background: ${(p) => (p.$open || p.$active ? "#76b9ed" : "transparent")};
  }
`;
const Letter = styled.span`
  position: absolute;
  left: ${(p) => p.$x}px;
  top: ${(p) => p.$y}px;
  width: 14px;
  color: #fff;
  font-size: ${(p) => p.$size}px;
  font-weight: ${(p) => p.$weight || 700};
  line-height: 14px;
  text-align: center;
`;
const Clock = styled.div`
  display: flex;
  flex-direction: column;
  align-items: center;
  width: 60px;
  margin-left: 10px;
  padding-top: 2px;
  line-height: 18px;
`;

const Office = ({ dark, grid }) => (
  <Draw $w={24} $vw={24}>
    <path fill="#fff" stroke={dark} d="M12 4.500h10.500v15H12z" />
    <path stroke={dark} strokeWidth="1.200" d="M13 7.500h8M13 10.500h8M13 13.500h8M13 16.500h8" />
    {grid && <path stroke={dark} d="M17.500 5v14" />}
    <path fill={dark} d="m1 3.500 13-2.500v22L1 20.500z" />
  </Draw>
);
const Laptop = ({ x, y }) => (
  <g transform={`translate(${x} ${y})`}>
    <path fill="#c8c8c8" stroke="#111" strokeWidth=".6" d="m2 0 9 .5-.8 8L1.500 8z" />
    <path fill="#0810e0" d="m3.200 1.500 6.300.3-.5 5L3 6.500z" />
    <path fill="#e4e4e4" stroke="#111" strokeWidth=".6" d="M1 8.500h11l1.500 3-3 .5H0z" />
  </g>
);

function Taskbar() {
  return (
    <TaskBar>
      <Cell $w={48}><Draw><path fill="#fff" d="m0 2.300 6.500-.9v6.200H0zM7.300 1.300 16 0v7.600H7.300zM0 8.400h6.500v6.200L0 13.700zM7.300 8.400H16V16l-8.700-1.200z" /></Draw></Cell>
      <Cell $w={48}><Draw><circle cx="10" cy="6" r="5.200" stroke="#fff" strokeWidth="1.200" /><path stroke="#fff" strokeWidth="1.400" d="M6.300 9.700.5 15.500" /></Draw></Cell>
      <Cell $w={48}><Draw><path stroke="#fff" strokeWidth="1.100" d="M.5 0v3h10V0M.5 16v-3h10v3M.5 5.500h10v5H.5zM14.500 0v4M14.500 8v8" /><path fill="#fff" d="M13 4.500h3v3h-3z" /></Draw></Cell>
      <Cell $ml={2}>
        <Draw $w={24} $vw={24}>
          <defs>
            <linearGradient id="edgeTop" x1="0" x2="1"><stop stopColor="#2aa7e8" /><stop offset=".6" stopColor="#35c6c8" /><stop offset="1" stopColor="#6edb51" /></linearGradient>
            <linearGradient id="edgeLow" x2="0" y2="1"><stop stopColor="#1682d8" /><stop offset="1" stopColor="#0c59a4" /></linearGradient>
          </defs>
          <circle cx="12" cy="12" r="12" fill="url(#edgeLow)" />
          <path fill="url(#edgeTop)" d="M.3 10C1.500 4 6.500 0 12 0c7 0 12 5 12 10.500 0 3.500-2.500 6-6 6-3 0-4.500-1.200-4.200-2.200 1.500-1.500 1-5.300-3.600-6.100C6 7.600 2 8.300.3 10z" />
          <path fill="#0f4f97" d="M9.500 11.500c-2 4.500 2 10.500 7 10.500 2.500-.6 4.500-2.200 5.800-4.200-4.300 2.200-11.300.2-12.800-6.300z" />
          <path fill="#252525" d="M13.800 14.300c.7-1 .9-2.300.2-3.600-2 .3-3.200 2.500-2 4.700 2 3 7 3.500 10 1.500l1-1.900c-3 2-8.400 1.700-9.200-.7z" />
        </Draw>
      </Cell>
      <Cell $open>
        <Draw $w={22} $h={20} $vw={22} $vh={20}>
          <path fill="#e0a11a" d="M0 1h8l2 2v4H0z" /><path fill="#ffd666" d="M0 4h22v15H0z" /><path fill="#f8c54a" d="M0 15h22v4H0z" />
          <path fill="#3b9be0" d="M4 19v-8h14v8h-4v-4H8v4z" />
        </Draw>
      </Cell>
      <Cell $open><Draw $w={24} $vw={24}><Laptop x={10.500} y={1} /><Laptop x={0.500} y={11} /><path fill="#ffef1c" stroke="#111" strokeWidth=".4" d="m17 7-5.500 4 3 1-6 4.500L11 12.500 8.500 11z" /></Draw></Cell>
      <Cell $active>
        <Draw $w={24} $vw={24}>
          <circle cx="12" cy="12" r="11.500" fill="#fbc116" /><path fill="#e33b2e" d="M2 6a11.500 11.500 0 0 1 20.400 1.500H12L7.500 14z" /><path fill="#279847" d="M2 6a11.500 11.500 0 0 0 9 17.500l4.500-7.500H8z" />
          <circle cx="12" cy="12" r="5.500" fill="#fff" /><circle cx="12" cy="12" r="4.300" fill="#1a73e8" /><circle cx="17.500" cy="17.500" r="8" fill="#bf360c" />
        </Draw>
        <Letter $x={23} $y={19} $size={9.5} $weight={400}>F</Letter>
      </Cell>
      <Cell><Draw $w={23} $vw={24}><circle cx="12" cy="12" r="12" fill="#ececec" /><path stroke="#e01b24" strokeWidth="2.600" d="m6 5.500 6 7.500 6-7.500M12 12.500v7" /></Draw></Cell>
      <Cell>
        <Draw $w={24} $vw={24}><ellipse cx="11.500" cy="11" rx="11" ry="6.500" fill="#8f8f8f" transform="rotate(-18 11.500 11)" /><ellipse cx="12.500" cy="8" rx="11" ry="6.500" fill="#f3f3f3" stroke="#dc4a4a" strokeWidth="1.300" transform="rotate(-18 12 8)" /><path stroke="#888" d="m6 8 10 8M15 4l2 12M7 10l8-4" /><circle cx="16" cy="19.500" r="2.500" stroke="#2d8fcc" strokeWidth="1.600" /><circle cx="21" cy="16.500" r="2.300" stroke="#2d8fcc" strokeWidth="1.600" /></Draw>
      </Cell>
      <Cell $open>
        <Draw $w={26} $vw={26}>
          <defs>
            <radialGradient id="discGlow" cx=".6" cy=".85" r=".65"><stop stopColor="#fff" /><stop offset=".35" stopColor="#a9dcff" /><stop offset=".7" stopColor="#2391f2" /><stop offset="1" stopColor="#0f6fd0" /></radialGradient>
          </defs>
          <path fill="#0e1118" d="M4 11c1-6 9-8.500 15-7.500 3 .5 5 1.500 5 3.500L8 13z" />
          <ellipse cx="13" cy="14" rx="12.800" ry="7" fill="url(#discGlow)" transform="rotate(-22 13 14)" />
          <path fill="#0b3f86" d="M5 12C8 8 17 5.500 22.500 7.500 19 10.500 9 13.500 5 12z" />
        </Draw>
      </Cell>
      <Cell $open><Office dark="#1e7145" grid /><Letter $x={13} $y={13} $size={11}>X</Letter></Cell>
      <Cell $open><Office dark="#2b579a" /><Letter $x={13} $y={13} $size={10}>W</Letter></Cell>
      <Cell $w={14} $ml={533}><Draw $w={12} $vw={12}><path stroke="#fff" strokeWidth="1.300" d="m.5 9 5.500-5.500L11.500 9" /></Draw></Cell>
      <Cell $w={18} $ml={8}><Draw $w={16}><path stroke="#fff" d="M5.500 4.500h9v7H3.500V8M1.500 2v2M4.500 2v2M.5 4.500h5V6L4 7.500H2L.5 6z" /><path fill="#fff" d="M5.500 6.500h6v3.500h-6zM15 6.500h1v3h-1z" /></Draw></Cell>
      <Cell $w={16} $ml={8}><Draw $w={14} $vw={14}><path stroke="#aaa" strokeWidth="1.100" d="M1 13C1 6.500 6 2 13 2M4 13c0-5 4-8 9-8" /><path stroke="#fff" strokeWidth="1.200" d="M7 13c0-3.500 2.500-5.200 6-5.200" /><path fill="#fff" d="M10.500 10.500H13V13h-2.500z" /></Draw></Cell>
      <Cell $w={18} $ml={5}><Draw $w={17} $vw={17}><path stroke="#fff" strokeWidth="1.100" d="M.6 6h3l3.500-3.500v12L3.600 11h-3zM9 6.500c1 1 1 3 0 4M11.500 5c2 2 2 5 0 7" /><path stroke="#777" d="M14 3.500c3 3 3 7 0 10" /></Draw></Cell>
      <Cell $w={23} $ml={10}><Text size={11.4} w={23} dy={-1}>ENG</Text></Cell>
      <Clock><Text size={11.4} w={27}>14:24</Text><Text size={11.4} w={54}>29.04.2023</Text></Clock>
      <Cell $w={16} $ml={15}><Draw $w={16}><path stroke="#fff" strokeWidth="1.100" d="M.6 1h14.800v11H10l-2.500 2.800V12H.6z" /></Draw></Cell>
      <Divider $ml={20} $h={40} $color="#6b6769" />
    </TaskBar>
  );
}

export default function App() {
  return (
    <Screen>
      <Global />
      <BrowserChrome />
      <Viewport>
        <RepoPage />
        <ScrollBar><Arrow $up /><Thumb /><Arrow /></ScrollBar>
      </Viewport>
      <Taskbar />
    </Screen>
  );
}
